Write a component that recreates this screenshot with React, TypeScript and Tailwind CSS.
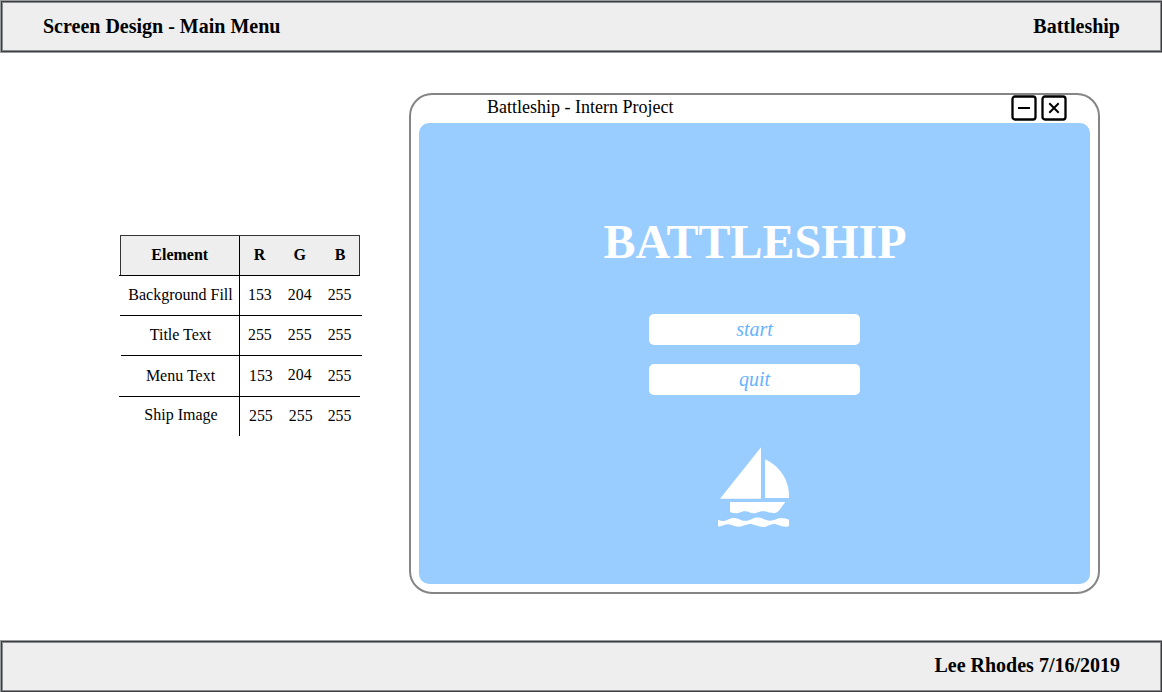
import React from 'react';

const BAR =
  'flex h-[53px] w-[1163px] shrink-0 justify-between border border-[#999c9d] bg-[#eeeeee] pl-[42px] pr-[42px] text-[20px] font-bold leading-[22px] shadow-[inset_0_0_0_1px_#3d3d42,inset_0_0_0_2px_#898c8e]';

type Row = { label: string; rgb: string[]; line: string; row: string; offsets: string[] };

const rows: Row[] = [
  { label: 'Background Fill', rgb: ['153', '204', '255'], line: 'ml-px w-[241px]', row: 'h-[39px]', offsets: ['pl-[2px]', '', '', ''] },
  { label: 'Title Text', rgb: ['255', '255', '255'], line: 'ml-px w-[242px]', row: 'h-[39px]', offsets: ['pl-[2px]', '', '', ''] },
  { label: 'Menu Text', rgb: ['153', '204', '255'], line: 'ml-[2px] w-[241px]', row: 'h-[40px]', offsets: ['pl-[2px] pt-[2px]', 'pl-[2px] pt-[2px]', '', 'pt-[2px]'] },
  { label: 'Ship Image', rgb: ['255', '255', '255'], line: 'w-[241px]', row: 'h-[39px]', offsets: ['pl-[3px] pb-px', 'pl-[2px]', 'pl-[2px]', ''] },
];

function ColourTable() {
  return (
    <div className="mt-[182px] ml-[119px] w-[244px] shrink-0 text-[16px] leading-[18px]">
      <div className="ml-px flex h-[41px] w-[240px] border border-[#333338] bg-[#eeeeee] font-bold">
        <div className="flex w-[119px] items-center justify-center border-r border-black pb-[2px]">Element</div>
        <div className="flex w-[40px] items-center justify-center pb-[2px]">R</div>
        <div className="flex w-[40px] items-center justify-center pb-[2px] pl-px">G</div>
        <div className="flex w-[40px] items-center justify-center pb-[2px] pl-[2px]">B</div>
      </div>
      {rows.map((r, i) => (
        <div key={r.label}>
          <div className={`h-px bg-black ${i === 0 ? '-mt-px ml-0 w-[241px]' : r.line}`} />
          <div className={`ml-px flex ${r.row}`}>
            <div className="w-[120px] border-r border-black pb-[2px]">
              <div className={`flex h-full items-center justify-center ${r.offsets[0]}`}>{r.label}</div>
            </div>
            {r.rgb.map((n, j) => (
              <div key={j} className="w-[39.8px] pb-[2px]">
                <div className={`flex h-full items-center justify-center text-[15.8px] ${r.offsets[j + 1]}`}>{n}</div>
              </div>
            ))}
          </div>
        </div>
      ))}
    </div>
  );
}

function WindowButton({ d, label }: { d: string; label: string }) {
  return (
    <button aria-label={label} className="h-[26px] w-[26px]">
      <svg width="26" height="26" viewBox="0 0 26 26" fill="none" stroke="#000" strokeWidth="2">
        <rect x="1.5" y="1.5" width="23" height="23" rx="2.5" strokeWidth="2.3" />
        <path d={d} />
      </svg>
    </button>
  );
}

function Sailboat() {
  return (
    <svg className="mt-[45px] shrink-0" width="100" height="95" viewBox="0 0 300 285" fill="#fff">
      <path d="M168 22V176H45Z" />
      <path d="M180 58Q213 72 235 106Q253 135 252 174H180Z" />
      <path d="M75 186H241L224 209Q217 219 205 219C190 219 187 214 174 214C161 214 157 220 146 220C135 220 131 214 120 214C109 214 105 220 93 220Q82 220 75 216Z" />
      <path d="M39 239C50 244 58 244 68 239C82 232 92 232 106 239C116 244 127 244 141 237C154 231 164 231 178 238C192 245 202 242 215 237C229 231 240 236 252 239V259C240 262 229 258 218 254C203 249 194 256 182 260C167 263 157 256 146 254C132 249 123 256 110 259C97 263 86 256 76 254C62 249 52 261 39 259Z" />
    </svg>
  );
}

function GameWindow() {
  return (
    <div className="mt-[40px] ml-[46px] flex h-[501px] w-[691px] shrink-0 flex-col rounded-[23px] border-2 border-[#858585] bg-white">
      <div className="flex h-[28px] shrink-0 items-start justify-between pr-[31px] pl-[76px]">
        <span className="pt-[2px] text-[18px] leading-[21px]">Battleship - Intern Project</span>
        <div className="flex gap-[4px]">
          <WindowButton label="Minimise" d="M7 13H19" />
          <WindowButton label="Close" d="M8.3 8.3L17.7 17.7M17.7 8.3L8.3 17.7" />
        </div>
      </div>
      <div className="ml-[8px] flex h-[461px] w-[671px] shrink-0 flex-col items-center rounded-[10px] bg-[#99ccff]">
        <h1 className="mt-[91px] pl-px text-[48px] font-bold leading-[55px] text-white">BATTLESHIP</h1>
        <button className="mt-[45px] h-[31px] w-[211px] shrink-0 rounded-[5px] bg-white text-[20px] leading-[29px] text-[#66b2ff] italic">start</button>
        <button className="mt-[19px] h-[31px] w-[211px] shrink-0 rounded-[5px] bg-white text-[20px] leading-[29px] text-[#66b2ff] italic">quit</button>
        <Sailboat />
      </div>
    </div>
  );
}

export default function App() {
  return (
    <div className="flex h-[692px] w-[1162px] flex-col overflow-hidden bg-white font-['Liberation_Serif',serif] text-black">
      <header className={BAR}>
        <span className="pt-[14px]">Screen Design - Main Menu</span>
        <span className="pt-[14px]">Battleship</span>
      </header>
      <main className="flex h-[587px] shrink-0 items-start">
        <ColourTable />
        <GameWindow />
      </main>
      <footer className={BAR}>
        <span />
        <span className="pt-[13px]">Lee Rhodes 7/16/2019</span>
      </footer>
    </div>
  );
}
